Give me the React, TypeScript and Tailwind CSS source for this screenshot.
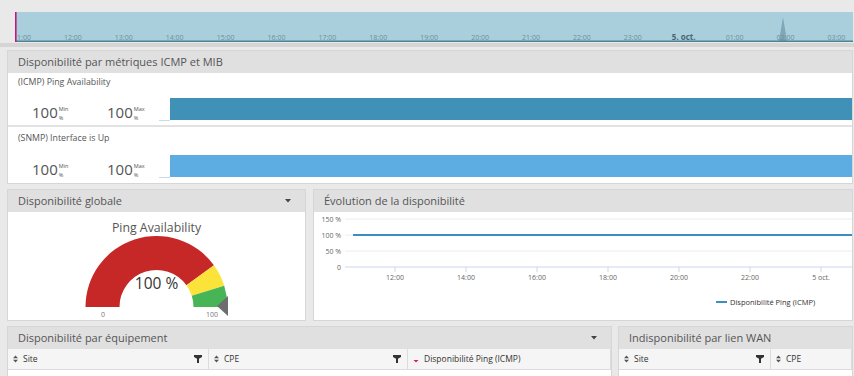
import React from 'react'

const TL_LABELS = ['11:00', '12:00', '13:00', '14:00', '15:00', '16:00', '17:00', '18:00', '19:00', '20:00', '21:00', '22:00', '23:00', '5. oct.', '01:00', '02:00', '03:00']

function Timeline() {
  return (
    <svg width="838" height="30" className="block">
      <rect width="838" height="30" fill="#a9cfdd" />
      <path d="M0 29 L764 29 L768 5 L772 29 L838 29 L838 30 L0 30 Z" fill="#7ea8b7" />
      <line x1="0" y1="29.2" x2="838" y2="29.2" stroke="#4f8394" strokeWidth="1.4" />
      {TL_LABELS.map((t, i) => (
        <text
          key={t}
          x={7 + i * 50.9}
          y="28"
          textAnchor="middle"
          fontSize={t === '5. oct.' ? 8 : 7}
          fontWeight={t === '5. oct.' ? 700 : 400}
          fill={t === '5. oct.' ? '#4a6670' : '#6c8f9b'}
        >
          {t}
        </text>
      ))}
      <line x1="0.8" y1="0" x2="0.8" y2="30" stroke="#c2187c" strokeWidth="1.6" />
    </svg>
  )
}

function Caret() {
  return (
    <svg width="6" height="4" viewBox="0 0 6 4">
      <path d="M0 0H6L3 3.5Z" fill="#444" />
    </svg>
  )
}

function PanelHeader({ title, caret }: { title: string; caret?: boolean }) {
  return (
    <div className="h-[22px] bg-[#e0e0e0] flex items-center justify-between pl-[10px] pr-[14px] text-[11px] text-[#555] shrink-0">
      <span>{title}</span>
      {caret && <Caret />}
    </div>
  )
}

function Value({ n, tag }: { n: string; tag: string }) {
  return (
    <div className="flex items-end leading-none text-[#555]">
      <span className="text-[15px]">{n}</span>
      <span className="flex flex-col text-[5.5px] leading-[6px] ml-[1px] mb-[-1px]">
        <span>{tag}</span>
        <span className="mt-[3px]">%</span>
      </span>
    </div>
  )
}

function MetricRow({ label, color, top, barTop }: { label: string; color: string; top: string; barTop: string }) {
  return (
    <div className={`bg-white shrink-0 ${top}`}>
      <div className="pl-[10px] text-[8.8px] text-[#555] leading-none">{label}</div>
      <div className={`flex items-end ${barTop}`}>
        <div className="w-[162px] shrink-0 flex items-end pl-[24px] relative">
          <div className="w-[75px]">
            <Value n="100" tag="Min" />
          </div>
          <Value n="100" tag="Max" />
          <div className="absolute right-0 bottom-[-1px] w-[11px] h-[1px] bg-[#c8dbee]" />
        </div>
        <div className="flex-1 h-[22px]" style={{ backgroundColor: color }} />
      </div>
    </div>
  )
}

const CX = 148.5
const CY = 95

function arc(R: number, r: number, a0: number, a1: number) {
  const p = (rad: number, a: number) => {
    const t = (a * Math.PI) / 180
    return `${(CX + rad * Math.cos(t)).toFixed(2)} ${(CY - rad * Math.sin(t)).toFixed(2)}`
  }
  return `M${p(R, a0)} A${R} ${R} 0 0 1 ${p(R, a1)} L${p(r, a1)} A${r} ${r} 0 0 0 ${p(r, a0)} Z`
}

function Gauge() {
  return (
    <svg width="297" height="108" className="block">
      <text x={CX} y="20" textAnchor="middle" fontSize="12.3" fill="#555">Ping Availability</text>
      <path d={arc(71, 37, 180, 36)} fill="#c62828" />
      <path d={arc(71, 37, 36, 17.5)} fill="#fbe33a" />
      <path d={arc(71, 37, 17.5, 0)} fill="#47b555" />
      <polygon points="220,84 209,94 220,104" fill="#6e6e6e" />
      <text x={CX} y="77" textAnchor="middle" fontSize="15.5" fill="#333">100 %</text>
      <text x="95" y="105" textAnchor="middle" fontSize="7" fill="#777">0</text>
      <text x="204" y="105" textAnchor="middle" fontSize="7" fill="#777">100</text>
    </svg>
  )
}

const X_TICKS = ['12:00', '14:00', '16:00', '18:00', '20:00', '22:00', '5 oct.']

function Evolution() {
  const ys = [['150 %', 7], ['100 %', 23], ['50 %', 39], ['0', 55]] as const
  return (
    <svg width="538" height="108" className="block">
      {ys.map(([l, y]) => (
        <g key={l}>
          <line x1="31" y1={y} x2="538" y2={y} stroke={l === '0' ? '#ccd6eb' : '#ececec'} strokeWidth="1" />
          <text x="27" y={y + 2.5} textAnchor="end" fontSize="7" fill="#666">{l}</text>
        </g>
      ))}
      {X_TICKS.map((t, i) => (
        <g key={t}>
          <line x1={81 + i * 71} y1="55" x2={81 + i * 71} y2="60" stroke="#ccd6eb" />
          <text x={81 + i * 71} y="68" textAnchor="middle" fontSize="7" fill="#666">{t}</text>
        </g>
      ))}
      <line x1="39" y1="23" x2="538" y2="23" stroke="#3d8ec0" strokeWidth="2" />
      <line x1="402" y1="90" x2="413" y2="90" stroke="#3d8ec0" strokeWidth="2" />
      <text x="416" y="93" fontSize="7.5" fill="#333">Disponibilité Ping (ICMP)</text>
    </svg>
  )
}

function SortIcon() {
  return (
    <svg width="5" height="8" viewBox="0 0 5 8">
      <path d="M0 3.3L2.5 0.5L5 3.3Z M0 4.7L2.5 7.5L5 4.7Z" fill="#555" />
    </svg>
  )
}

function PinkSort() {
  return (
    <svg width="6" height="8" viewBox="0 0 6 8">
      <path d="M0.5 5L3 7.5L5.5 5Z" fill="#d81b7a" />
    </svg>
  )
}

function FilterIcon() {
  return (
    <svg width="8" height="8" viewBox="0 0 8 8">
      <path d="M0 0H8V2L5 3.8V8H3V3.8L0 2Z" fill="#333" />
    </svg>
  )
}

function Col({ label, w, filter, pink }: { label: string; w?: string; filter?: boolean; pink?: boolean }) {
  return (
    <div className={`${w ?? 'flex-1'} h-full flex items-center justify-between pl-[5px] pr-[6px] border-r border-[#dcdcdc] shrink-0`}>
      <div className="flex items-center gap-[5px]">
        {pink ? <PinkSort /> : <SortIcon />}
        <span>{label}</span>
      </div>
      {filter && <FilterIcon />}
    </div>
  )
}

export default function App() {
  return (
    <div className="w-[854px] h-[376px] overflow-hidden bg-[#e9e9e9] font-['Open_Sans',sans-serif]">
      <div className="pt-[12px] pl-[15px] pr-[1px]">
        <Timeline />
      </div>
      <div className="h-[4px] bg-[#d5d5d5] mt-[1px]" />

      <div className="flex flex-col pl-[7px] pr-[1px] mt-[3px]">
        <div className="h-[134px] border border-[#d6d6d6] bg-[#dcdcdc] flex flex-col shrink-0">
          <PanelHeader title="Disponibilité par métriques ICMP et MIB" />
          <MetricRow label="(ICMP) Ping Availability" color="#4091b7" top="h-[52px] pt-[5px]" barTop="mt-[11px]" />
          <div className="h-[2px] bg-[#e2e2e2] shrink-0" />
          <MetricRow label="(SNMP) Interface is Up" color="#5eade2" top="flex-1 pt-[7px]" barTop="mt-[12px]" />
        </div>

        <div className="flex gap-[7px] mt-[5px] h-[132px] shrink-0">
          <div className="w-[299px] border border-[#d6d6d6] bg-white flex flex-col shrink-0">
            <PanelHeader title="Disponibilité globale" caret />
            <Gauge />
          </div>
          <div className="flex-1 border border-[#d6d6d6] bg-white flex flex-col">
            <PanelHeader title="Évolution de la disponibilité" />
            <Evolution />
          </div>
        </div>

        <div className="flex gap-[6px] mt-[5px] h-[60px] shrink-0">
          <div className="w-[605px] border border-[#d6d6d6] bg-white flex flex-col shrink-0">
            <PanelHeader title="Disponibilité par équipement" caret />
            <div className="h-[21px] bg-[#f5f5f5] border-b border-[#dcdcdc] flex text-[8.5px] text-[#333] shrink-0">
              <Col label="Site" w="w-[201px]" filter />
              <Col label="CPE" w="w-[199px]" filter />
              <Col label="Disponibilité Ping (ICMP)" pink />
            </div>
          </div>
          <div className="flex-1 border border-[#d6d6d6] bg-white flex flex-col">
            <PanelHeader title="Indisponibilité par lien WAN" />
            <div className="h-[21px] bg-[#f5f5f5] border-b border-[#dcdcdc] flex text-[8.5px] text-[#333] shrink-0">
              <Col label="Site" w="w-[152px]" filter />
              <Col label="CPE" />
            </div>
          </div>
        </div>
      </div>
    </div>
  )
}
